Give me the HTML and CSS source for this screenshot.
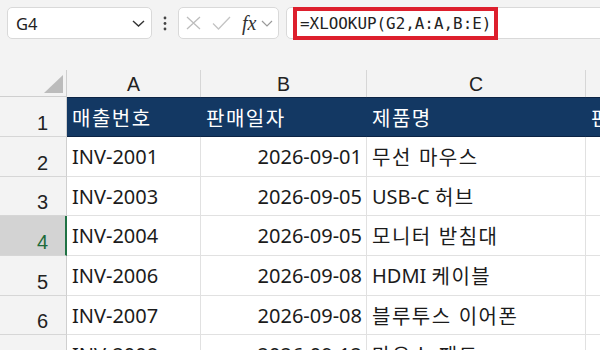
FILE: index.html
```html
<!DOCTYPE html>
<html lang="ko">
<head>
<meta charset="utf-8">
<link rel="stylesheet" href="styles.css">
</head>
<body>
<div class="toolbar">
  <div class="namebox">
    <span class="ref">G4</span>
    <svg class="chev" width="13" height="7" viewBox="0 0 13 7"><path d="M1 1 L6.5 6 L12 1" fill="none" stroke="#333" stroke-width="1.4"/></svg>
  </div>
  <div class="dots">
    <svg width="4" height="15" viewBox="0 0 4 15"><circle cx="2" cy="2" r="1.4" fill="#444"/><circle cx="2" cy="7.5" r="1.4" fill="#444"/><circle cx="2" cy="13" r="1.4" fill="#444"/></svg>
  </div>
  <div class="fxbox">
    <svg class="ic-x" width="15" height="14" viewBox="0 0 15 14"><path d="M1 1 L14 13 M14 1 L1 13" stroke="#bdbdbd" stroke-width="1.3" fill="none"/></svg>
    <svg class="ic-ok" width="19" height="14" viewBox="0 0 19 14"><path d="M1 7.5 L6.5 13 L18 1" stroke="#c4c4c4" stroke-width="1.3" fill="none"/></svg>
    <span class="fx">fx</span>
    <svg class="ic-dd" width="12" height="7" viewBox="0 0 12 7"><path d="M1 1 L6 6 L11 1" fill="none" stroke="#9a9a9a" stroke-width="1.2"/></svg>
  </div>
  <div class="formula">
    <span class="hl">=XLOOKUP(G2,A:A,B:E)</span>
  </div>
</div>

<div class="sheet">
  <div class="corner"><svg width="19" height="18" viewBox="0 0 19 18"><polygon points="19,0 19,18 0,18" fill="#bcbcbc"/></svg></div>
  <div class="colhead">A</div>
  <div class="colhead">B</div>
  <div class="colhead">C</div>
  <div class="colhead">D</div>

  <div class="rowhead">1</div>
  <div class="cell th"><span class="ko">매출번호</span></div>
  <div class="cell th"><span class="ko">판매일자</span></div>
  <div class="cell th"><span class="ko">제품명</span></div>
  <div class="cell th"><span class="ko">판매수량</span></div>

  <div class="rowhead">2</div>
  <div class="cell">INV-2001</div>
  <div class="cell num">2026-09-01</div>
  <div class="cell"><span class="ko">무선 마우스</span></div>
  <div class="cell"></div>

  <div class="rowhead">3</div>
  <div class="cell">INV-2003</div>
  <div class="cell num">2026-09-05</div>
  <div class="cell"><span>USB-C </span><span class="ko">허브</span></div>
  <div class="cell"></div>

  <div class="rowhead sel">4</div>
  <div class="cell">INV-2004</div>
  <div class="cell num">2026-09-05</div>
  <div class="cell"><span class="ko">모니터 받침대</span></div>
  <div class="cell"></div>

  <div class="rowhead">5</div>
  <div class="cell">INV-2006</div>
  <div class="cell num">2026-09-08</div>
  <div class="cell"><span>HDMI </span><span class="ko">케이블</span></div>
  <div class="cell"></div>

  <div class="rowhead">6</div>
  <div class="cell">INV-2007</div>
  <div class="cell num">2026-09-08</div>
  <div class="cell"><span class="ko">블루투스 이어폰</span></div>
  <div class="cell"></div>

  <div class="rowhead">7</div>
  <div class="cell">INV-2008</div>
  <div class="cell num">2026-09-12</div>
  <div class="cell"><span class="ko">마우스 패드</span></div>
  <div class="cell"></div>
</div>
</body>
</html>
```

FILE: styles.css
```css
* { box-sizing: border-box; }
html, body { margin: 0; padding: 0; }
body {
  width: 600px;
  height: 350px;
  overflow: hidden;
  background: #f3f3f3;
  font-family: "Noto Sans", "Noto Sans CJK KR", sans-serif;
  color: #1b1b1b;
}

/* ---------- formula bar ---------- */
.toolbar {
  display: flex;
  align-items: stretch;
  height: 39px;
  padding: 7px 0 0 7px;
  width: 640px;
}
.namebox {
  width: 145px;
  height: 32px;
  background: #fff;
  border: 1px solid #d9d9d9;
  border-radius: 5px;
  display: flex;
  align-items: center;
  justify-content: space-between;
  padding: 0 6px 0 8px;
}
.namebox .ref {
  font-family: "Noto Sans", sans-serif;
  font-size: 16.5px;
  color: #222;
}
.dots {
  width: 26px;
  display: flex;
  align-items: center;
  justify-content: center;
}
.fxbox {
  width: 101px;
  height: 32px;
  background: #fff;
  border: 1px solid #d9d9d9;
  border-radius: 5px;
  display: flex;
  align-items: center;
  padding-left: 7px;
}
.ic-x { margin-right: 11px; }
.ic-ok { margin-right: 11px; }
.fx {
  font-family: "Liberation Serif", "DejaVu Serif", serif;
  font-style: italic;
  font-size: 20px;
  color: #333;
  margin-right: 5px;
  line-height: 1;
}
.formula {
  flex: 1;
  height: 32px;
  margin-left: 7px;
  background: #fff;
  border: 1px solid #d9d9d9;
  border-radius: 5px 0 0 5px;
  display: flex;
  align-items: stretch;
  padding-left: 6px;
}
.hl {
  display: flex;
  align-items: center;
  margin-top: -1px;
  height: 33px;
  border: 4px solid #dd1f2d;
  padding: 0 3px 0 3px;
  font-family: "DejaVu Sans Mono", monospace;
  font-size: 15.9px;
  color: #222;
}

/* ---------- sheet grid ---------- */
.sheet {
  margin-top: 31px;
  display: grid;
  grid-template-columns: 67px 134px 166px 219px 200px;
  grid-template-rows: 27px 40px 40px 39px 40px 40px 39px 40px;
  width: 786px;
}
.corner {
  border-right: 1px solid #cfcfcf;
  border-bottom: 1px solid #cfcfcf;
  display: flex;
  justify-content: flex-end;
  align-items: flex-end;
  padding: 0 3px 3px 0;
}
.colhead {
  border-right: 1px solid #d6d6d6;
  display: flex;
  align-items: center;
  justify-content: center;
  font-family: "Liberation Sans", Arial, sans-serif;
  font-size: 19.5px;
  color: #222;
  padding-top: 1px;
}
.rowhead {
  background: #f3f3f3;
  border-right: 1px solid #cfcfcf;
  border-bottom: 1px solid #d6d6d6;
  display: flex;
  justify-content: flex-end;
  align-items: flex-end;
  padding: 0 18px 3px 0;
  font-family: "Liberation Sans", Arial, sans-serif;
  font-size: 20px;
  line-height: 1;
  color: #222;
}
.rowhead.sel {
  background: #d3d3d3;
  color: #1d6b3a;
  border-right: 2px solid #1f7244;
  padding-right: 17px;
}
.cell {
  background: #fff;
  border-right: 1px solid #e1e1e1;
  border-bottom: 1px solid #e1e1e1;
  display: flex;
  align-items: center;
  padding: 0 5px;
  font-size: 20px;
  white-space: pre;
  overflow: hidden;
  color: #1b1b1b;
}
.ko {
  font-family: "Noto Sans CJK KR", sans-serif;
  font-size: 20px;
  letter-spacing: 1.5px;
}
.cell.num {
  justify-content: flex-end;
  padding-right: 4px;
}
.cell.th {
  background: #133863;
  color: #fff;
  border-right: 1px solid #133863;
  border-top: 1px solid #0b2344;
  border-bottom: 1px solid #0b2344;
}
```
